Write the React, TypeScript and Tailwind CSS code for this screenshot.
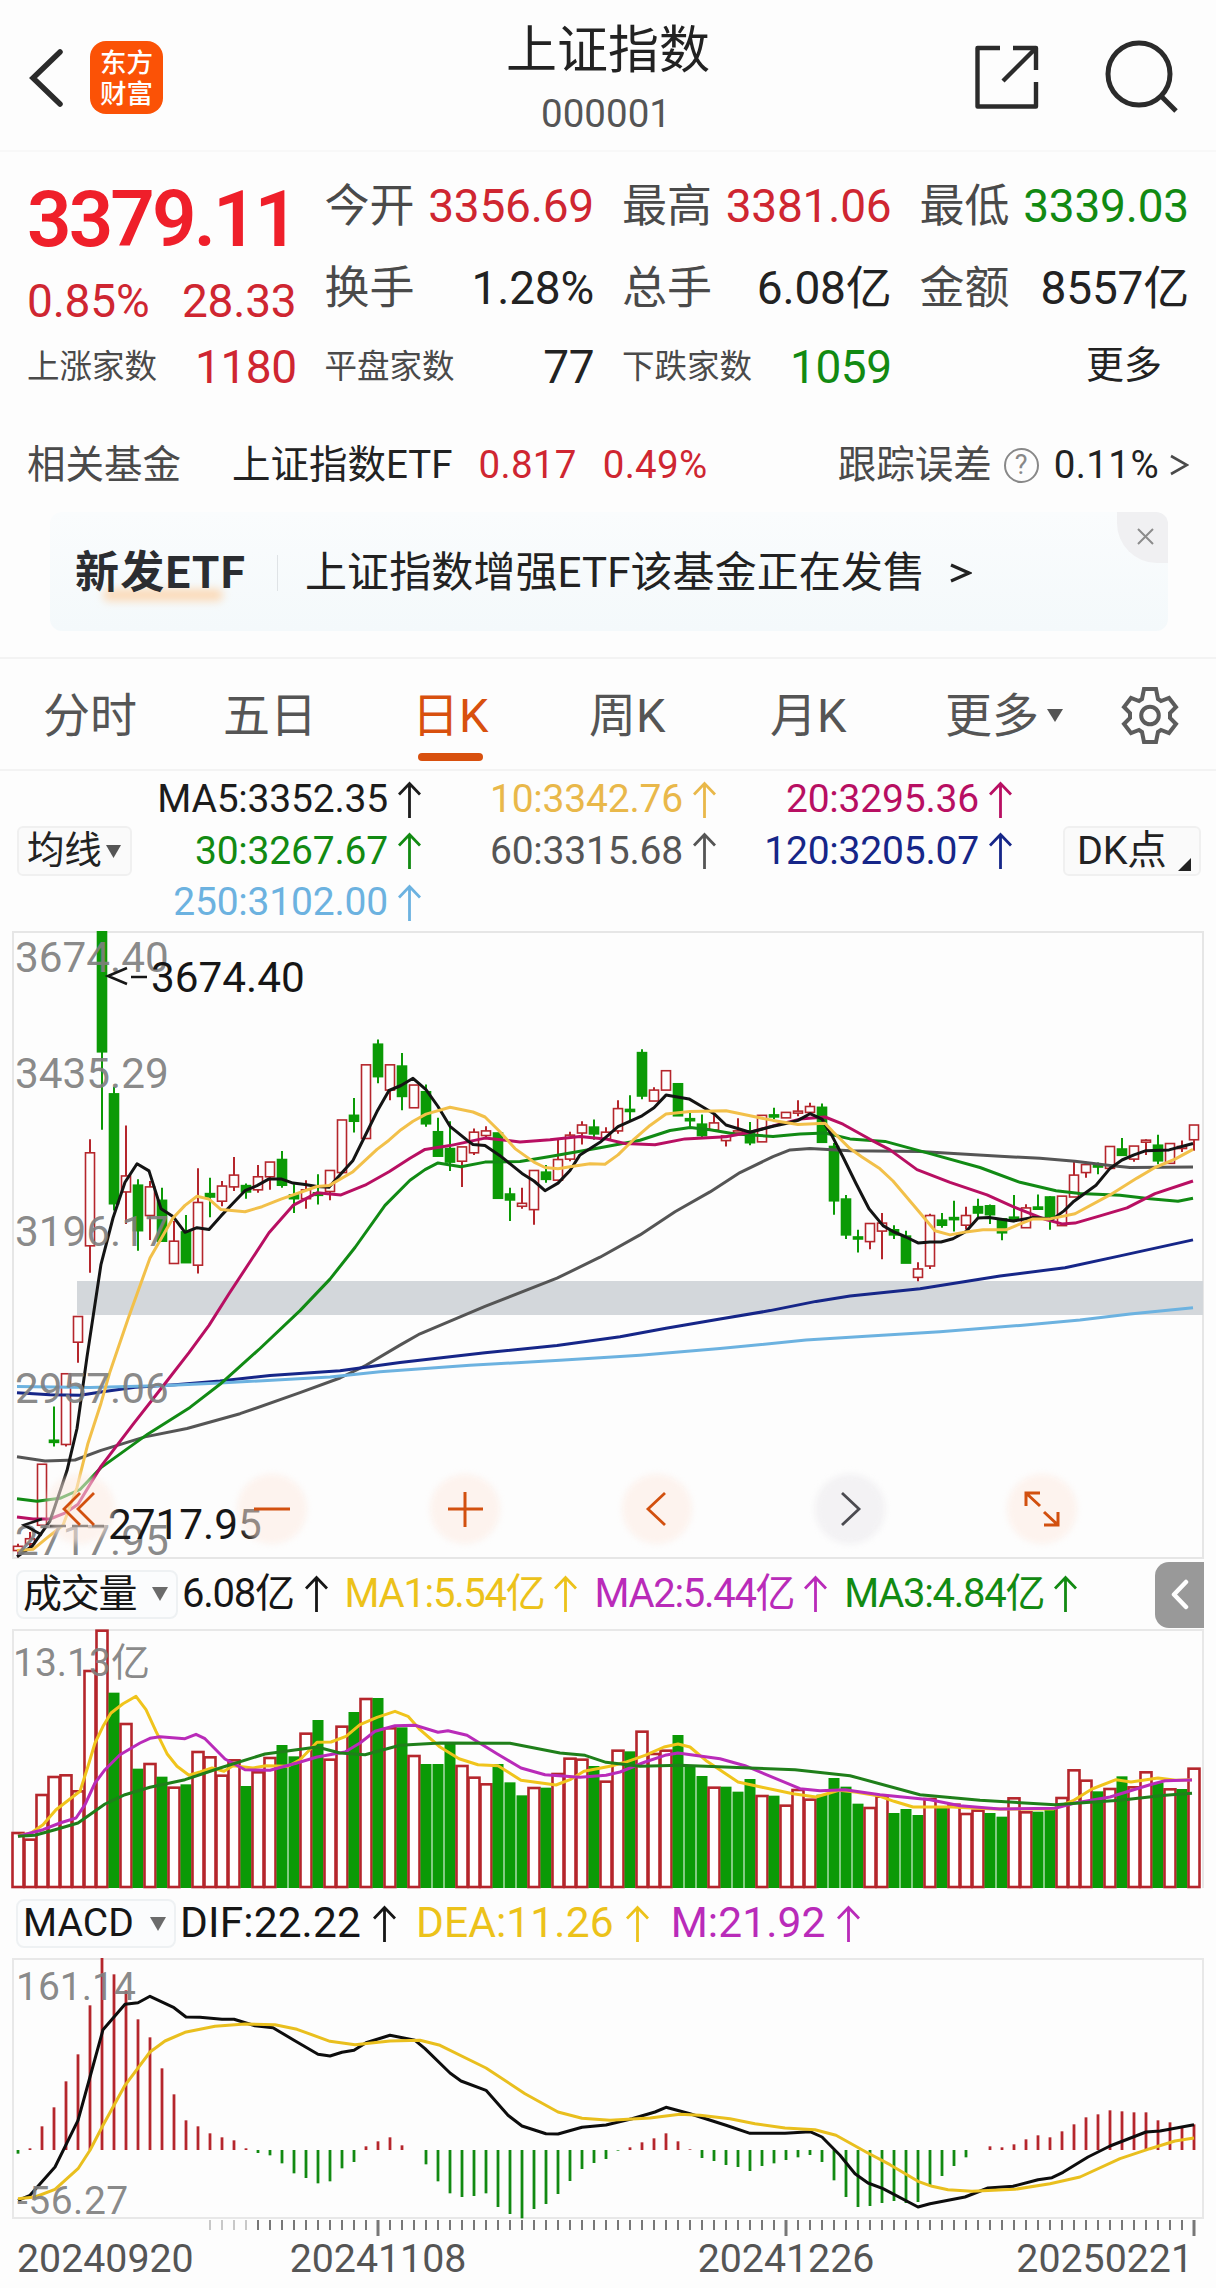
import { Fragment, ReactNode } from 'react';

type Point = [number, number];
// up/down flag, body top, body bottom, wick top, wick bottom
type Candle = [0 | 1, number, number, number, number];

const STEP = 12;
const FIRST_X = 18;
const RED = '#b5262c';
const GREEN = '#0b9a06';

const CANDLES: Candle[] = [
    [1, 1490, 1500, 1484, 1516], [1, 1472, 1484, 1456, 1492], [1, 1295, 1440, 1295, 1440], [0, 1238, 1243, 1158, 1253],
    [1, 1080, 1248, 1080, 1253], [1, 944, 1005, 944, 1054], [1, 555, 776, 523, 840], [0, 28, 315, 28, 500],
    [0, 415, 676, 398, 692], [1, 610, 648, 490, 724], [0, 632, 740, 618, 788], [1, 636, 704, 622, 762],
    [0, 668, 765, 638, 765], [1, 765, 818, 717, 818], [0, 743, 816, 703, 816], [1, 673, 822, 592, 842],
    [0, 652, 660, 614, 708], [1, 634, 670, 622, 682], [1, 608, 636, 565, 646], [0, 633, 648, 628, 664],
    [1, 612, 643, 584, 650], [1, 577, 612, 577, 643], [0, 571, 632, 551, 638], [0, 655, 664, 630, 698],
    [1, 643, 664, 620, 688], [0, 650, 656, 606, 678], [1, 597, 647, 597, 668], [1, 477, 602, 477, 602],
    [0, 466, 480, 425, 507], [1, 346, 521, 346, 521], [0, 297, 374, 286, 390], [1, 346, 406, 346, 430],
    [0, 349, 421, 318, 454], [1, 394, 448, 394, 448], [0, 410, 486, 393, 493], [0, 505, 563, 472, 563],
    [0, 545, 577, 480, 598], [1, 541, 575, 541, 636], [1, 506, 555, 497, 560], [1, 503, 514, 492, 522],
    [0, 508, 663, 508, 663], [0, 653, 667, 638, 717], [1, 675, 682, 638, 688], [1, 597, 690, 597, 726],
    [0, 601, 618, 584, 626], [1, 571, 620, 520, 620], [1, 513, 570, 505, 575], [1, 489, 508, 480, 535],
    [0, 494, 510, 476, 524], [1, 506, 522, 494, 522], [1, 450, 503, 430, 510], [0, 452, 455, 418, 480],
    [0, 317, 420, 309, 428], [1, 406, 432, 399, 432], [1, 360, 406, 360, 406], [0, 391, 467, 391, 467],
    [0, 474, 477, 460, 493], [0, 487, 514, 464, 518], [1, 484, 501, 465, 501], [1, 515, 526, 515, 540],
    [1, 503, 508, 473, 508], [0, 503, 531, 482, 537], [1, 466, 529, 466, 529], [0, 465, 468, 448, 475],
    [1, 459, 472, 459, 472], [1, 456, 460, 430, 468], [1, 445, 459, 436, 459], [0, 447, 530, 438, 530],
    [0, 540, 669, 532, 702], [0, 665, 750, 655, 760], [0, 755, 758, 738, 792], [1, 723, 766, 723, 784],
    [1, 722, 741, 698, 808], [0, 738, 750, 727, 760], [0, 753, 817, 740, 817], [1, 831, 851, 815, 860],
    [1, 704, 824, 700, 831], [0, 715, 727, 698, 733], [0, 709, 712, 669, 742], [1, 704, 727, 683, 737],
    [0, 683, 698, 664, 712], [0, 681, 702, 678, 724], [0, 712, 745, 712, 763], [0, 708, 711, 655, 720],
    [1, 686, 733, 677, 733], [0, 684, 689, 654, 689], [0, 660, 706, 658, 738], [1, 658, 728, 658, 728],
    [1, 608, 660, 573, 660], [1, 583, 602, 576, 614], [0, 584, 587, 578, 606], [1, 540, 592, 540, 592],
    [0, 546, 561, 520, 561], [1, 539, 570, 539, 576], [1, 525, 528, 523, 560], [0, 537, 574, 512, 582],
    [1, 533, 580, 533, 580], [1, 540, 543, 526, 553], [1, 489, 524, 489, 550],
];

const PRICE_LINES: { color: string; points: Point[] }[] = [
    {
        color: '#555555',
        points: [[17, 1277], [45, 1287], [75, 1285], [101, 1262], [145, 1230], [187, 1210], [240, 1175], [300, 1125], [340, 1090], [366, 1060], [400, 1012], [420, 985], [485, 920], [557, 853], [600, 803], [640, 750], [675, 695], [710, 648], [740, 602], [773, 564], [790, 548], [810, 545], [850, 550], [920, 552], [1000, 563], [1040, 568], [1075, 575], [1110, 585], [1130, 590], [1193, 589]],
    },
    {
        color: '#162688',
        points: [[17, 1125], [50, 1130], [80, 1131], [101, 1123], [135, 1112], [175, 1106], [220, 1097], [270, 1084], [340, 1073], [400, 1053], [485, 1030], [557, 1013], [620, 992], [666, 972], [720, 950], [770, 930], [816, 908], [850, 895], [920, 878], [1000, 848], [1065, 828], [1120, 800], [1193, 762]],
    },
    {
        color: '#6cb2e0',
        points: [[17, 1110], [90, 1113], [166, 1108], [220, 1102], [330, 1088], [380, 1075], [470, 1060], [560, 1048], [640, 1036], [720, 1020], [806, 1000], [870, 990], [940, 980], [1020, 965], [1080, 952], [1130, 938], [1193, 923]],
    },
    {
        color: '#118a14',
        points: [[17, 1377], [37, 1383], [60, 1376], [80, 1355], [101, 1303], [148, 1223], [190, 1160], [220, 1105], [260, 1020], [300, 930], [330, 855], [355, 780], [385, 680], [410, 620], [425, 595], [438, 579], [461, 588], [485, 577], [520, 576], [550, 564], [600, 543], [640, 525], [670, 502], [690, 495], [710, 500], [735, 510], [773, 516], [800, 510], [825, 508], [850, 522], [885, 528], [930, 557], [980, 590], [1020, 625], [1056, 645], [1080, 652], [1120, 656], [1150, 664], [1178, 670], [1193, 663]],
    },
    {
        color: '#b80f62',
        points: [[17, 1420], [33, 1425], [50, 1425], [66, 1410], [78, 1390], [101, 1300], [133, 1200], [166, 1100], [189, 1030], [209, 965], [229, 890], [269, 745], [293, 680], [317, 650], [341, 655], [365, 632], [389, 600], [410, 568], [425, 547], [450, 538], [485, 520], [520, 529], [550, 524], [580, 516], [605, 522], [625, 533], [655, 536], [685, 522], [726, 517], [750, 506], [775, 490], [800, 475], [825, 470], [843, 487], [870, 523], [890, 548], [917, 595], [950, 625], [987, 655], [1013, 683], [1045, 713], [1062, 724], [1075, 722], [1100, 705], [1127, 686], [1155, 652], [1193, 622]],
    },
    {
        color: '#141414',
        points: [[17, 1515], [32, 1490], [50, 1430], [67, 1310], [77, 1210], [87, 1040], [101, 820], [113, 710], [125, 625], [137, 581], [149, 598], [161, 688], [173, 706], [185, 744], [197, 733], [209, 737], [221, 705], [233, 675], [245, 645], [257, 633], [269, 617], [281, 617], [293, 627], [305, 630], [317, 635], [329, 637], [341, 605], [353, 573], [365, 515], [377, 457], [389, 407], [401, 395], [413, 378], [426, 405], [438, 445], [450, 492], [467, 525], [473, 535], [485, 538], [500, 562], [522, 604], [534, 622], [545, 645], [558, 627], [570, 597], [580, 560], [600, 530], [618, 493], [642, 467], [654, 448], [666, 418], [689, 427], [702, 445], [714, 462], [726, 489], [750, 506], [773, 492], [787, 485], [798, 478], [810, 462], [822, 475], [831, 510], [843, 565], [856, 628], [869, 688], [883, 728], [893, 742], [906, 755], [918, 769], [930, 767], [941, 767], [953, 759], [966, 742], [978, 710], [989, 709], [1013, 717], [1033, 709], [1053, 712], [1064, 693], [1074, 670], [1096, 632], [1110, 592], [1122, 572], [1134, 560], [1146, 550], [1169, 548], [1193, 533]],
    },
    {
        color: '#f2c04a',
        points: [[17, 1500], [33, 1497], [47, 1470], [63, 1440], [77, 1350], [88, 1245], [101, 1150], [110, 1075], [128, 950], [150, 805], [173, 710], [185, 680], [197, 658], [209, 665], [221, 690], [245, 695], [262, 683], [281, 665], [317, 635], [329, 633], [353, 600], [377, 547], [389, 525], [401, 500], [413, 480], [426, 463], [450, 447], [473, 458], [485, 470], [500, 505], [515, 545], [534, 577], [545, 590], [558, 593], [573, 587], [590, 581], [605, 582], [618, 560], [633, 525], [650, 490], [666, 463], [690, 457], [726, 455], [750, 467], [773, 478], [798, 488], [825, 485], [833, 505], [850, 545], [862, 565], [880, 593], [893, 622], [918, 692], [935, 740], [950, 750], [966, 743], [983, 738], [1006, 738], [1019, 725], [1033, 712], [1050, 712], [1075, 700], [1110, 655], [1137, 615], [1155, 590], [1175, 570], [1193, 547]],
    },
];

const VOLUMES = [
    847, 867, 733, 679, 674, 722, 361, 240, 429, 520, 657, 640, 681, 711, 704, 604, 620, 675, 629, 709,
    665, 622, 586, 620, 549, 511, 627, 528, 487, 445, 445, 533, 533, 616, 643, 643, 577, 646, 681, 701,
    643, 698, 737, 712, 714, 670, 624, 627, 649, 693, 600, 605, 543, 610, 600, 556, 648, 679, 711, 711,
    726, 688, 736, 738, 765, 718, 747, 735, 685, 711, 762, 772, 738, 790, 778, 796, 745, 772, 762, 790,
    780, 790, 801, 743, 785, 786, 776, 742, 659, 690, 725, 715, 680, 710, 665, 700, 716, 718, 654,
];
const VOLUME_DOWN = new Set([
    8, 10, 12, 14, 19, 22, 23, 25, 28, 30, 32, 34, 35, 36, 40, 41, 42, 44, 48, 51, 55, 56, 57, 59, 60, 61, 63,
    67, 68, 69, 70, 73, 74, 75, 77, 81, 82, 85, 86, 90, 92, 95, 97,
]);

const VOLUME_LINES: { color: string; points: Point[] }[] = [
    {
        color: '#f0c41c',
        points: [[18, 858], [31, 850], [43, 825], [56, 780], [80, 725], [88, 650], [95, 580], [103, 530], [111, 490], [123, 462], [136, 440], [146, 480], [156, 545], [167, 612], [177, 650], [189, 677], [200, 667], [212, 655], [224, 665], [233, 648], [253, 655], [266, 648], [288, 650], [300, 630], [317, 578], [331, 577], [346, 560], [360, 525], [377, 503], [395, 485], [408, 500], [420, 540], [440, 592], [459, 627], [478, 645], [498, 648], [521, 692], [556, 706], [570, 690], [584, 665], [610, 650], [625, 638], [645, 617], [664, 592], [678, 583], [690, 592], [707, 635], [738, 697], [762, 713], [793, 732], [816, 742], [839, 722], [855, 727], [878, 738], [894, 755], [913, 772], [952, 772], [972, 775], [995, 778], [1053, 778], [1073, 753], [1092, 718], [1116, 690], [1131, 697], [1158, 685], [1176, 692], [1192, 690]],
    },
    {
        color: '#b92bb9',
        points: [[18, 860], [43, 840], [60, 820], [76, 805], [85, 765], [95, 700], [105, 660], [120, 615], [140, 580], [150, 566], [160, 561], [185, 567], [196, 554], [205, 567], [225, 628], [245, 660], [270, 662], [297, 640], [317, 622], [345, 607], [360, 580], [375, 545], [395, 528], [415, 527], [438, 548], [448, 543], [467, 557], [497, 612], [521, 655], [545, 675], [580, 683], [606, 677], [620, 667], [645, 637], [665, 617], [678, 610], [720, 627], [745, 648], [800, 717], [820, 723], [845, 720], [880, 735], [930, 750], [960, 768], [1000, 778], [1055, 776], [1075, 760], [1110, 742], [1150, 705], [1165, 693], [1192, 691]],
    },
    {
        color: '#1f7f1a',
        points: [[18, 860], [35, 857], [55, 840], [78, 820], [105, 763], [125, 735], [150, 713], [185, 690], [220, 655], [265, 613], [317, 592], [340, 610], [365, 615], [400, 587], [440, 580], [510, 581], [560, 610], [585, 617], [606, 638], [640, 650], [680, 647], [750, 655], [795, 660], [850, 678], [920, 735], [980, 752], [1055, 765], [1090, 758], [1120, 752], [1165, 737], [1192, 731]],
    },
];

const MACD_ZERO = 779;
const MACD_BARS = [
    790, 774, 708, 651, 573, 492, 345, 203, 252, 300, 387, 441, 534, 612, 690, 708, 729, 741, 750, 774,
    788, 795, 819, 849, 863, 879, 873, 834, 815, 768, 753, 741, 765, 779, 822, 873, 909, 920, 917, 909,
    950, 971, 984, 956, 941, 911, 872, 836, 818, 806, 781, 771, 756, 744, 729, 753, 777, 803, 812, 824,
    830, 842, 827, 819, 809, 801, 794, 815, 870, 920, 950, 947, 938, 932, 938, 935, 886, 857, 827, 801,
    779, 768, 771, 762, 747, 735, 741, 723, 702, 681, 672, 660, 663, 666, 666, 690, 696, 711, 702,
];

const MACD_LINES: { color: string; points: Point[] }[] = [
    {
        color: '#0d0d0d',
        points: [[18, 930], [30, 915], [55, 830], [78, 690], [90, 560], [103, 418], [125, 342], [138, 337], [150, 318], [174, 352], [186, 380], [200, 381], [222, 387], [234, 387], [255, 406], [273, 412], [294, 450], [318, 492], [330, 497], [342, 486], [354, 480], [366, 457], [390, 435], [415, 450], [425, 475], [450, 548], [461, 572], [486, 600], [508, 675], [522, 707], [546, 730], [558, 731], [582, 711], [606, 704], [632, 685], [655, 665], [666, 651], [690, 670], [726, 705], [750, 729], [785, 729], [810, 724], [822, 740], [840, 795], [855, 850], [868, 878], [883, 895], [918, 950], [930, 940], [965, 920], [988, 893], [1013, 888], [1038, 868], [1052, 862], [1063, 846], [1088, 800], [1110, 767], [1146, 725], [1160, 722], [1194, 703]],
    },
    {
        color: '#e9bf1e',
        points: [[18, 925], [35, 920], [55, 897], [78, 835], [90, 780], [103, 705], [125, 585], [150, 485], [165, 452], [185, 426], [215, 408], [245, 401], [275, 403], [297, 417], [330, 453], [355, 463], [390, 452], [420, 450], [440, 465], [486, 533], [525, 610], [558, 665], [582, 684], [610, 690], [650, 683], [680, 672], [700, 675], [730, 685], [755, 700], [785, 713], [815, 718], [836, 735], [866, 785], [890, 823], [918, 873], [932, 888], [948, 898], [972, 903], [1015, 897], [1050, 880], [1080, 860], [1120, 805], [1150, 775], [1175, 752], [1194, 743]],
    },
];

const priceY = (v: number) => (v - 28) / 2.376;
const volumeY = (v: number) => (v - 238) / 3;
const macdY = (v: number) => (v - 203) / 3;
const barX = (i: number) => FIRST_X + i * STEP;

const toPoints = (points: Point[], scale: (v: number) => number) =>
    points.map(([x, y]) => `${x},${scale(y).toFixed(1)}`).join(' ');

function Lines({ lines, scale }: { lines: { color: string; points: Point[] }[]; scale: (v: number) => number }) {
    return (
        <g fill="none" strokeWidth="3" strokeLinejoin="round">
            {lines.map((line) => (
                <polyline key={line.color} points={toPoints(line.points, scale)} stroke={line.color} />
            ))}
        </g>
    );
}

function UpArrow() {
    return (
        <svg width="23" height="38" viewBox="0 0 23 38" fill="none" stroke="currentColor" strokeWidth="2.8" className="shrink-0">
            <path d="M11.5 37V3M1 13.5 11.5 2.5 22 13.5" />
        </svg>
    );
}

function Quote({ label, value, color = 'text-[#222222]' }: { label: string; value: string; color?: string }) {
    return (
        <div className="flex h-20 items-center justify-between">
            <span className="text-[45px] text-[#4a4a4a]">{label}</span>
            <span className={`text-[46px] tracking-[-0.2px] ${color}`}>{value}</span>
        </div>
    );
}

function Count({ label, value, color }: { label: string; value: string; color: string }) {
    return (
        <div className="flex h-[78px] items-center justify-between">
            <span className="text-[32.5px] text-[#4a4a4a]">{label}</span>
            <span className={`text-[46px] tracking-[-0.5px] ${color}`}>{value}</span>
        </div>
    );
}

function Average({ color, children }: { color: string; children: ReactNode }) {
    return (
        <div className={`flex items-center justify-end gap-2.5 ${color}`}>
            <span>{children}</span>
            <UpArrow />
        </div>
    );
}

function RoundButton({ gray, children }: { gray?: boolean; children: ReactNode }) {
    return (
        <button
            className={`relative flex size-[74px] items-center justify-center ${gray ? 'text-[#4b4b50]' : 'text-[#d2500f]'}`}
        >
            <span className={`absolute inset-0.5 rounded-full blur-[3px] ${gray ? 'bg-[#efeef0]/75' : 'bg-[#fdebe1]/55'}`} />
            <svg width="40" height="40" viewBox="0 0 40 40" fill="none" stroke="currentColor" strokeWidth="2.8" className="relative">
                {children}
            </svg>
        </button>
    );
}

function Header() {
    return (
        <header className="grid h-[152px] grid-cols-[1fr_auto_1fr] border-b-2 border-[#f8f8f8]">
            <div className="flex items-start gap-[26px] pt-[41px] pl-[29px]">
                <svg width="35" height="74" viewBox="0 0 35 74" fill="none" stroke="#2b2b2b" strokeWidth="5.5" strokeLinecap="round">
                    <path d="M31 11 4 37 31 63" />
                </svg>
                <div className="flex size-[73px] flex-col items-center justify-center rounded-[16px] bg-[#fb5206] text-[26.5px] leading-[31px] font-medium text-white">
                    <span>东方</span>
                    <span>财富</span>
                </div>
            </div>
            <div className="flex flex-col items-center pt-[24px]">
                <h1 className="text-[51px] leading-[54px] text-[#222222]">上证指数</h1>
                <span className="mt-[17px] -ml-1 text-[38.5px] leading-[38px] text-[#555555]">000001</span>
            </div>
            <div className="flex items-start justify-end gap-[64px] pt-[38px] pr-[36px]">
                <svg width="68" height="76" viewBox="0 0 68 76" fill="none" stroke="#2b2b2b" strokeWidth="4.4" strokeLinejoin="round">
                    <path d="M27 10H4.500V68.500H63V44M40 10H63V32M62 11 30 43" />
                </svg>
                <svg width="75" height="78" viewBox="0 0 75 78" fill="none" stroke="#2b2b2b" strokeWidth="5">
                    <circle cx="34" cy="36" r="31" />
                    <path d="M57 59 71 73" />
                </svg>
            </div>
        </header>
    );
}

function Summary() {
    return (
        <section className="grid h-[253px] grid-cols-4 gap-x-7 pt-[14px] pr-[27px] pl-[27px] leading-none">
            <div>
                <div className="flex h-[108px] items-center text-[78px] font-semibold tracking-[-2.9px] text-[#ef1f2a]">3379.11</div>
                <div className="flex h-[54px] items-center justify-between text-[46px] tracking-[-0.2px] text-[#cf2631]">
                    <span>0.85%</span>
                    <span>28.33</span>
                </div>
                <Count label="上涨家数" value="1180" color="text-[#cf2631]" />
            </div>
            <div>
                <Quote label="今开" value="3356.69" color="text-[#cf2631]" />
                <div className="h-0.5" />
                <Quote label="换手" value="1.28%" />
                <Count label="平盘家数" value="77" color="text-[#222222]" />
            </div>
            <div>
                <Quote label="最高" value="3381.06" color="text-[#cf2631]" />
                <div className="h-0.5" />
                <Quote label="总手" value="6.08亿" />
                <Count label="下跌家数" value="1059" color="text-[#128a12]" />
            </div>
            <div>
                <Quote label="最低" value="3339.03" color="text-[#128a12]" />
                <div className="h-0.5" />
                <Quote label="金额" value="8557亿" />
                <div className="flex h-[74px] items-center justify-end pr-[27px] text-[38px] text-[#222222]">更多</div>
            </div>
        </section>
    );
}

function RelatedFund() {
    return (
        <section className="flex h-[107px] items-center pt-[13px] pr-[27px] pl-[27px] text-[38.5px] leading-none text-[#222222]">
            <span className="text-[#4a4a4a]">相关基金</span>
            <span className="ml-[51px]">上证指数ETF</span>
            <span className="ml-[26px] tracking-[0.3px] text-[#cf2631]">0.817</span>
            <span className="ml-[26px] tracking-[0.3px] text-[#cf2631]">0.49%</span>
            <span className="ml-auto text-[#4a4a4a]">跟踪误差</span>
            <span className="mr-[15px] ml-[12px] flex size-[35px] items-center justify-center rounded-full border-2 border-[#888888] text-[27px] text-[#888888]">
                ?
            </span>
            <span className="tracking-[0.4px]">0.11%</span>
            <svg width="19" height="22" viewBox="0 0 19 22" fill="none" stroke="#4a4a4a" strokeWidth="2.6" className="ml-[11px]">
                <path d="M1 2 17 11 1 20" />
            </svg>
        </section>
    );
}

function Banner() {
    return (
        <section className="relative mr-[48px] ml-[50px] flex h-[119px] items-center overflow-hidden rounded-[12px] bg-linear-to-b from-[#fafcfd] to-[#f4f9fb] pt-[3px] pl-[25px] leading-none text-[#222222]">
            <div className="relative w-[175px] text-[44px] font-bold tracking-[1.3px] whitespace-nowrap text-[#2b2d31]">
                <span className="absolute bottom-[-6px] left-[28px] h-3 w-[120px] rounded-full bg-[#ffc48a]/60 blur-[4px]" />
                <span className="relative">新发ETF</span>
            </div>
            <span className="mr-[27px] ml-[27px] h-9 w-px bg-[#dfe3e6]" />
            <span className="text-[42px] tracking-[0.1px]">上证指数增强ETF该基金正在发售</span>
            <svg width="22" height="22" viewBox="0 0 22 22" fill="none" stroke="#222222" strokeWidth="3.2" className="ml-[25px]">
                <path d="M1 3 19 11 1 19" />
            </svg>
            <div className="absolute top-0 right-0 flex size-[51px] items-start justify-end rounded-bl-[40px] bg-[#f0f0f2] pt-[16px] pr-[14px]">
                <svg width="17" height="17" viewBox="0 0 17 17" stroke="#8c8c8c" strokeWidth="2">
                    <path d="M1 1 16 16M16 1 1 16" />
                </svg>
            </div>
        </section>
    );
}

function Tabs() {
    return (
        <nav className="mt-[26px] flex h-[114px] items-center border-t-2 border-b-2 border-[#f3f3f3] pt-[2px] pr-[37px] pl-[43px] text-[47px] leading-none text-[#555555]">
            <span className="w-[180px]">分时</span>
            <span className="w-[189px]">五日</span>
            <span className="relative w-[177px] text-[#d8500e]">
                日K
                <span className="absolute top-[61px] left-[6px] h-2 w-[65px] rounded-full bg-[#d8500e]" />
            </span>
            <span className="w-[181px]">周K</span>
            <span className="w-[175px]">月K</span>
            <span>更多</span>
            <svg width="16" height="13" viewBox="0 0 16 13" fill="#555555" className="ml-[8px]">
                <path d="M0 0H16L8 13Z" />
            </svg>
            <svg width="58" height="58" viewBox="0 0 58 58" fill="none" stroke="#5c5c5c" strokeWidth="4" strokeLinejoin="miter" className="ml-auto">
                <path d="M23 3H35L37 13 40 15 48 12 55 21 49 27V32L55 38 48 47 40 44 37 46 35 56H23L21 46 18 44 10 47 3 38 9 32V27L3 21 10 12 18 15 21 13Z" />
                <circle cx="29" cy="29.5" r="8.8" />
            </svg>
        </nav>
    );
}

function Averages() {
    return (
        <section className="flex h-[160px] items-center pr-[15px] pl-[17px] text-[39px] leading-none tracking-[-0.2px]">
            <button className="flex h-[50px] w-[115px] items-center gap-1 rounded-[6px] border-2 border-[#f0f0f0] bg-[#fafafa] pl-2 text-[37.5px] text-[#222222]">
                均线
                <svg width="15" height="13" viewBox="0 0 15 13" fill="#555555">
                    <path d="M0 0H15L7.5 13Z" />
                </svg>
            </button>
            <div className="grid grid-cols-[289px_295px_296px] grid-rows-[51.5px_51.5px_51.5px]">
                <Average color="text-[#1c1c1c]">MA5:3352.35</Average>
                <Average color="text-[#e9b84a]">10:3342.76</Average>
                <Average color="text-[#b80f62]">20:3295.36</Average>
                <Average color="text-[#128a12]">30:3267.67</Average>
                <Average color="text-[#555555]">60:3315.68</Average>
                <Average color="text-[#162688]">120:3205.07</Average>
                <Average color="text-[#6cb2e0]">250:3102.00</Average>
            </div>
            <button className="ml-auto flex h-[50px] w-[138px] items-center rounded-[6px] border-2 border-[#f0f0f0] bg-[#fafafa] pl-[12px] text-[39.5px] text-[#222222]">
                DK点
                <svg width="13" height="13" viewBox="0 0 13 13" fill="#222222" className="mt-[26px] ml-[11px]">
                    <path d="M13 0V13H0Z" />
                </svg>
            </button>
        </section>
    );
}

function PriceChart() {
    return (
        <section className="relative h-[628px]">
            <svg width="1216" height="628" viewBox="0 0 1216 628" className="block">
                <rect x="13" y="1" width="1190" height="626" fill="none" stroke="#e6e6e6" strokeWidth="2" />
                <rect x="77" y="350" width="1126" height="34" fill="#d3d7db" />
                {CANDLES.map(([up, top, bottom, high, low], i) => {
                    const x = barX(i);
                    const y = priceY(top);
                    const h = Math.max(priceY(bottom) - y, 2);
                    const color = up ? RED : GREEN;
                    return (
                        <g key={i}>
                            <path d={`M${x} ${priceY(high)}V${y}M${x} ${y + h}V${priceY(low)}`} stroke={color} strokeWidth="2" />
                            <rect x={x - 4.5} y={y} width="9" height={h} fill={up ? 'white' : color} fillOpacity={up ? 0.5 : 1} stroke={color} strokeWidth="1.6" />
                        </g>
                    );
                })}
                <Lines lines={PRICE_LINES} scale={priceY} />
                <g fontSize="42.3" fill="#7f7f7f" fillOpacity="0.92">
                    <text x="15" y="41">3674.40</text>
                    <text x="15" y="157">3435.29</text>
                    <text x="15" y="315">3196.17</text>
                    <text x="15" y="472">2957.06</text>
                    <text x="15" y="624">2717.95</text>
                </g>
                <g fontSize="42.3" fill="#161616">
                    <text x="151" y="61">3674.40</text>
                    <text x="108" y="608">2717.95</text>
                </g>
                <path d="M127 37 108 45 127 53M131 46H147M42 588 24 594 42 604M50 595H66M72 595H88M92 595H104" fill="none" stroke="#161616" strokeWidth="2.6" />
            </svg>
            <div className="absolute top-[541px] left-[43px] flex w-[1036px] justify-between">
                <RoundButton><path d="M20 4 4 20 20 36M34 4 18 20 34 36" /></RoundButton>
                <RoundButton><path d="M2 20H38" strokeWidth="3" /></RoundButton>
                <RoundButton><path d="M3 20H38M20 3V38" strokeWidth="3" /></RoundButton>
                <RoundButton><path d="M28 4 11 20 28 36" /></RoundButton>
                <RoundButton gray><path d="M12 4 29 20 12 36" /></RoundButton>
                <RoundButton>
                    <path d="M18 4H4V17M4 4 18 17M22 23 36 36M36 23V36H22" strokeWidth="3" />
                </RoundButton>
            </div>
        </section>
    );
}

function IndicatorSelect({ children }: { children: ReactNode }) {
    return (
        <button className="mr-1 flex h-[49px] items-center gap-[16px] rounded-[8px] border-2 border-[#eef1f3] bg-[#fbfcfd] pr-[8px] pl-[5px] text-[39px] text-[#161616]">
            {children}
            <svg width="16" height="14" viewBox="0 0 16 14" fill="#6b6b6b">
                <path d="M0 0H16L8 14Z" />
            </svg>
        </button>
    );
}

function VolumeChart() {
    return (
        <section>
            <div className="relative flex h-[70px] items-center pl-[16px] text-[40px] leading-none tracking-[-1.3px]">
                <IndicatorSelect>成交量</IndicatorSelect>
                <div className="flex items-center gap-[11px] text-[#161616]">6.08亿<UpArrow /></div>
                <div className="ml-[17px] flex items-center gap-[10px] text-[#ecc21a]">MA1:5.54亿<UpArrow /></div>
                <div className="ml-[17px] flex items-center gap-[10px] text-[#b92bb9]">MA2:5.44亿<UpArrow /></div>
                <div className="ml-[17px] flex items-center gap-[10px] text-[#128a12]">MA3:4.84亿<UpArrow /></div>
                <button className="absolute top-[3px] right-[12px] flex h-[66px] w-[49px] items-center justify-center rounded-l-[14px] bg-[#999999]">
                    <svg width="18" height="32" viewBox="0 0 18 32" fill="none" stroke="white" strokeWidth="4.5" strokeLinecap="round" strokeLinejoin="round">
                        <path d="M15 3 3 15.500 15 28" />
                    </svg>
                </button>
            </div>
            <svg width="1216" height="260" viewBox="0 0 1216 260" className="block">
                <path d="M13 259V1H1203V259" fill="none" stroke="#e8e8e8" strokeWidth="2" />
                {VOLUMES.map((v, i) => {
                    const y = volumeY(v);
                    return VOLUME_DOWN.has(i) ? (
                        <rect key={i} x={barX(i) - 5.5} y={y} width="11" height={259 - y} fill={GREEN} />
                    ) : (
                        <rect key={i} x={barX(i) - 5.5} y={y + 1} width="11" height={257 - y} fill="white" stroke={RED} strokeWidth="2.6" />
                    );
                })}
                <Lines lines={VOLUME_LINES} scale={volumeY} />
                <text x="13" y="47" fontSize="39" fill="#7f7f7f" fillOpacity="0.92">13.13亿</text>
            </svg>
        </section>
    );
}

function MacdChart() {
    return (
        <section>
            <div className="flex h-[69px] items-center pl-[16px] text-[42.5px] leading-none tracking-[0.1px]">
                <IndicatorSelect>MACD</IndicatorSelect>
                <div className="flex items-center gap-[12px] text-[#161616]">DIF:22.22<UpArrow /></div>
                <div className="ml-[20px] flex items-center gap-[12px] text-[#ecc21a]">DEA:11.26<UpArrow /></div>
                <div className="ml-[22px] flex items-center gap-[12px] text-[#b92bb9]">M:21.92<UpArrow /></div>
            </div>
            <svg width="1216" height="330" viewBox="0 0 1216 330" className="block">
                <rect x="13" y="1" width="1190" height="259" fill="none" stroke="#e8e8e8" strokeWidth="2" />
                {MACD_BARS.map((v, i) => (
                    <path
                        key={i}
                        d={`M${barX(i)} ${macdY(MACD_ZERO)}V${macdY(v)}`}
                        stroke={v < MACD_ZERO ? RED : '#128a12'}
                        strokeWidth="2.8"
                    />
                ))}
                <Lines lines={MACD_LINES} scale={macdY} />
                <g fontSize="39" fill="#7f7f7f" fillOpacity="0.92">
                    <text x="16" y="42">161.14</text>
                    <text x="17" y="256" letterSpacing="0.5">-56.27</text>
                </g>
                {MACD_BARS.map((_, i) => (
                    <Fragment key={i}>
                        {i >= 16 && (
                            <path
                                d={`M${barX(i)} 262V${[30, 64, 98].includes(i) ? 278 : 272}`}
                                stroke="#777777"
                                strokeWidth={[30, 64, 98].includes(i) ? 3 : 2}
                                strokeOpacity={i < 20 ? 0.4 : 1}
                            />
                        )}
                    </Fragment>
                ))}
                <g fontSize="39.3" fill="#555555">
                    <text x="17" y="314">20240920</text>
                    <text x="378" y="314" textAnchor="middle">20241108</text>
                    <text x="786" y="314" textAnchor="middle">20241226</text>
                    <text x="1193" y="314" textAnchor="end">20250221</text>
                </g>
            </svg>
        </section>
    );
}

export default function App() {
    return (
        <div className="h-[2288px] w-[1216px] overflow-hidden bg-[#fdfdfd] font-[Roboto,'Noto_Sans_CJK_SC',sans-serif]">
            <Header />
            <Summary />
            <RelatedFund />
            <Banner />
            <Tabs />
            <Averages />
            <PriceChart />
            <VolumeChart />
            <MacdChart />
        </div>
    );
}
